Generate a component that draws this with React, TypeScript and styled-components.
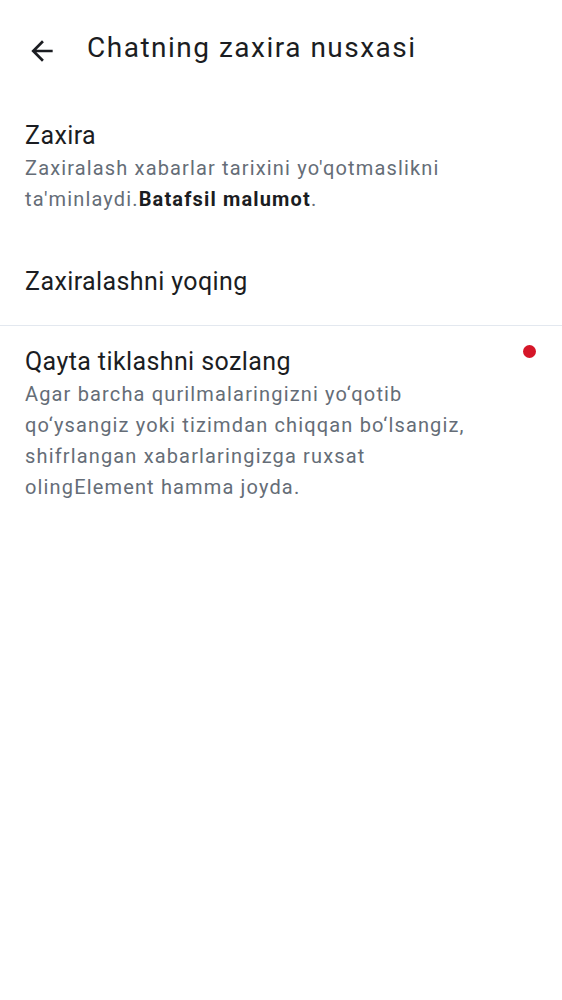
import React from "react";
import styled, { createGlobalStyle } from "styled-components";

const Global = createGlobalStyle`
  html, body { margin: 0; padding: 0; background: #ffffff; }
  body { font-family: Roboto, "Noto Sans", sans-serif; -webkit-font-smoothing: antialiased; }
`;

const Page = styled.div`
  width: 562px;
  min-height: 1000px;
  background: #ffffff;
  display: flex;
  flex-direction: column;
`;

const Header = styled.header`
  height: 96px;
  display: flex;
  align-items: center;
  padding-left: 26px;
  gap: 29px;
  box-sizing: border-box;
`;

const BackButton = styled.button`
  width: 32px;
  height: 32px;
  padding: 0;
  margin-top: 6px;
  border: none;
  background: transparent;
  display: flex;
  align-items: center;
  justify-content: center;
  color: #1b1d22;
  svg { display: block; }
`;

const Title = styled.h1`
  margin: 0;
  font-size: 28px;
  line-height: 36px;
  letter-spacing: 1.5px;
  font-weight: 400;
  color: #1b1d22;
`;

const Item = styled.div<{ $top: number; $bottom: number; $divider?: boolean }>`
  position: relative;
  padding: ${(p) => p.$top}px 25px ${(p) => p.$bottom}px 25px;
  border-bottom: ${(p) => (p.$divider ? "1px solid #e3e8ef" : "none")};
`;

const ItemTitle = styled.div`
  font-size: 25px;
  line-height: 32px;
  letter-spacing: 0.4px;
  color: #1b1d22;
`;

const ItemText = styled.div`
  margin-top: 1px;
  font-size: 20px;
  line-height: 31.3px;
  letter-spacing: 1.15px;
  color: #656d77;
  max-width: 450px;
  b { font-weight: 700; color: #1b1d22; }
`;

const Dot = styled.span`
  position: absolute;
  top: 19px;
  right: 26px;
  width: 13px;
  height: 13px;
  border-radius: 50%;
  background: #d51628;
`;

export default function App() {
  return (
    <Page>
      <Global />
      <Header>
        <BackButton aria-label="Orqaga">
          <svg width="32" height="32" viewBox="0 0 24 24" fill="currentColor">
            <path d="M20 11H7.83l5.59-5.59L12 4l-8 8 8 8 1.41-1.41L7.83 13H20v-2z" />
          </svg>
        </BackButton>
        <Title>Chatning zaxira nusxasi</Title>
      </Header>
      <Item $top={24} $bottom={24}>
        <ItemTitle>Zaxira</ItemTitle>
        <ItemText>
          Zaxiralash xabarlar tarixini yo'qotmaslikni ta'minlaydi.<b>Batafsil malumot</b>.
        </ItemText>
      </Item>
      <Item $top={26} $bottom={27} $divider>
        <ItemTitle>Zaxiralashni yoqing</ItemTitle>
      </Item>
      <Item $top={20} $bottom={20}>
        <ItemTitle>Qayta tiklashni sozlang</ItemTitle>
        <ItemText>
          Agar barcha qurilmalaringizni yo‘qotib qo‘ysangiz yoki tizimdan chiqqan bo‘lsangiz,
          shifrlangan xabarlaringizga ruxsat olingElement hamma joyda.
        </ItemText>
        <Dot />
      </Item>
    </Page>
  );
}
